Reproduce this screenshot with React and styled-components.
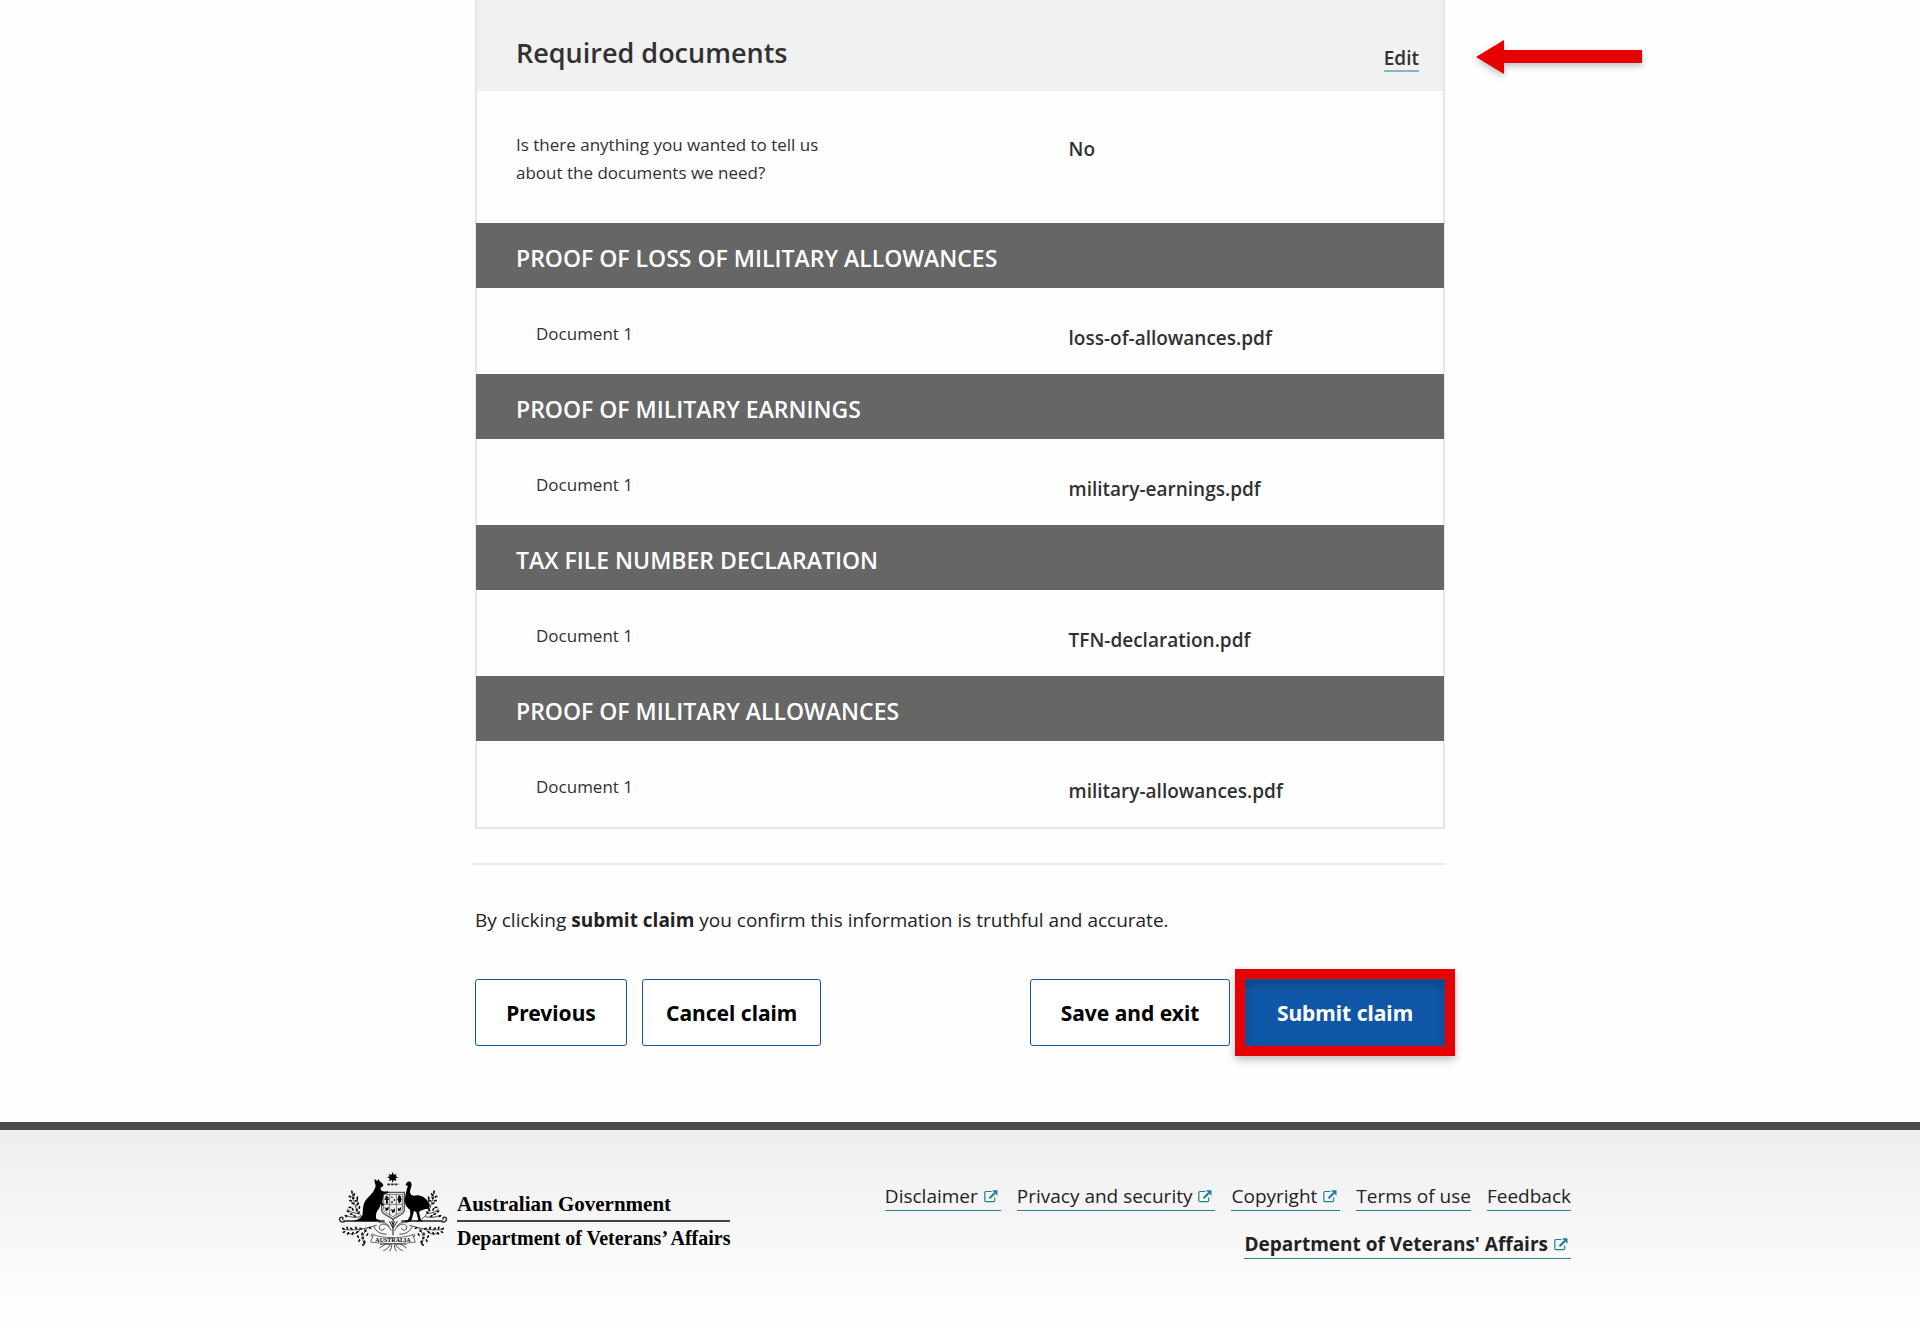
import styled, { createGlobalStyle } from 'styled-components';

const GlobalStyle = createGlobalStyle`
  * {
    box-sizing: border-box;
  }

  body {
    margin: 0;
    background: #fefefe;
    color: #313131;
    font-family: 'Open Sans', 'Noto Sans', sans-serif;
  }
`;

const Main = styled.main`
  max-width: 970px;
  margin: 0 auto 76px;
`;

const Card = styled.section`
  border: 2px solid #e7e7e7;
  border-top: none;
`;

const CardHeader = styled.header`
  position: relative;
  display: flex;
  justify-content: space-between;
  align-items: flex-end;
  padding: 34px 24px 19px 39px;
  background: #f1f1f1;
`;

const CardTitle = styled.h2`
  margin: 0;
  font-size: 27px;
  line-height: 38px;
  font-weight: 600;
`;

const EditLink = styled.a`
  border-bottom: 2px solid #84b7c4;
  color: #313131;
  font-size: 19px;
  line-height: 24px;
  font-weight: 600;
  text-decoration: none;
`;

const Arrow = styled.svg`
  position: absolute;
  top: 36px;
  left: calc(100% + 33px);
  width: 170px;
  height: 44px;
  filter: drop-shadow(0 3px 3px rgba(0, 0, 0, 0.25));
`;

const Answers = styled.dl`
  margin: 0;
`;

const Answer = styled.div`
  display: grid;
  grid-template-columns: 62% 1fr;
  padding: ${({ $nested }) => ($nested ? '32px 39px 23px' : '40px 39px 36px')};
`;

const Question = styled.dt`
  max-width: 340px;
  padding-left: ${({ $nested }) => ($nested ? '20px' : '0')};
  font-size: 17px;
  line-height: 28px;
`;

const Value = styled.dd`
  margin: 0;
  padding: 6px 0 0 2px;
  font-size: 19px;
  line-height: 25px;
  font-weight: 600;
`;

const SectionTitle = styled.h3`
  margin: 0 -1px;
  padding: 19px 40px 14px;
  background: #666;
  color: #fff;
  font-size: 23px;
  line-height: 32px;
  font-weight: 600;
  text-transform: uppercase;
`;

const Divider = styled.hr`
  height: 2px;
  margin: 34px 0 0 -3px;
  border: none;
  background: #ebebeb;
`;

const Confirmation = styled.p`
  margin: 41px 0 45px;
  color: #222;
  font-size: 19px;
  line-height: 28px;
`;

const Actions = styled.div`
  display: flex;
  justify-content: space-between;
`;

const ActionGroup = styled.div`
  display: flex;
  gap: 15px;
`;

const Button = styled.button`
  min-width: ${({ $wide }) => ($wide ? '200px' : '152px')};
  height: 67px;
  padding: 0 23px;
  border: 1px solid #0f56a6;
  border-radius: 3px;
  background: #fff;
  color: #000;
  font-family: 'Noto Sans', sans-serif;
  font-size: 21px;
  font-weight: 700;
  cursor: pointer;
`;

const SubmitButton = styled(Button)`
  border-radius: 0;
  background: #1157a8;
  color: #fff;
  box-shadow: 0 0 0 10px #e60000, 0 4px 8px 10px rgba(0, 0, 0, 0.25),
    inset 0 4px 8px rgba(0, 0, 0, 0.25);
`;

const Footer = styled.footer`
  border-top: 8px solid #4a4a4a;
  background: linear-gradient(#eee, #fefefe 180px);
`;

const FooterInner = styled.div`
  display: flex;
  justify-content: space-between;
  max-width: 1244px;
  min-height: 197px;
  margin: 0 auto;
  padding: 42px 11px 0 0;
`;

const Brand = styled.a`
  display: flex;
  align-items: flex-start;
  gap: 9px;
  color: #000;
  text-decoration: none;
`;

const Crest = styled.svg`
  width: 110px;
  height: 80px;
`;

const BrandText = styled.span`
  display: flex;
  flex-direction: column;
  padding-top: 16px;
  font-family: 'Liberation Serif', serif;
  font-size: 20px;
  line-height: 32px;
  font-weight: 700;
`;

const Government = styled.span`
  border-bottom: 2px solid #444;
  font-size: 21px;
`;

const FooterNav = styled.nav`
  display: flex;
  flex-direction: column;
  align-items: flex-end;
  gap: 20px;
  padding-top: 11px;
`;

const LinkRow = styled.div`
  display: flex;
  gap: 16px;
`;

const FooterLink = styled.a`
  border-bottom: 1px solid #2b8295;
  color: #222;
  font-size: 19px;
  line-height: 27px;
  font-weight: ${({ $bold }) => ($bold ? 700 : 400)};
  text-decoration: none;
  white-space: nowrap;
`;

const LinkIcon = styled.svg`
  width: 14px;
  height: 14px;
  margin: 0 3px 0 6px;
`;

const documents = [
  { title: 'Proof of loss of military allowances', file: 'loss-of-allowances.pdf' },
  { title: 'Proof of military earnings', file: 'military-earnings.pdf' },
  { title: 'Tax file number declaration', file: 'TFN-declaration.pdf' },
  { title: 'Proof of military allowances', file: 'military-allowances.pdf' },
];

const footerLinks = [
  { label: 'Disclaimer', external: true },
  { label: 'Privacy and security', external: true },
  { label: 'Copyright', external: true },
  { label: 'Terms of use' },
  { label: 'Feedback' },
];

// x, y and angle of every leaf on the left side, the right side is mirrored
const leaves = [
  [66, 96, 80], [72, 104, 110], [60, 110, 20], [70, 114, 140], [82, 114, 100],
  [62, 122, 10], [78, 122, 150], [68, 130, 30], [84, 132, 120], [60, 142, 0],
  [54, 154, 20], [68, 148, 60], [64, 162, 10], [80, 150, 110], [86, 158, 130],
  [48, 168, 40], [74, 168, 20], [88, 142, 100],
  [40, 206, 30], [42, 216, 160], [52, 204, 70], [54, 220, 130], [64, 206, 40],
  [68, 220, 110], [78, 204, 60], [82, 216, 140], [92, 206, 30], [96, 222, 100],
  [84, 230, 60], [98, 234, 20], [88, 242, 120], [104, 246, 80], [100, 254, 150],
  [106, 212, 50], [112, 224, 120], [120, 204, 20],
];

const ExternalIcon = () => (
  <LinkIcon viewBox="0 0 14 14" aria-hidden="true">
    <path
      d="M7.5 2.5H2A1.2 1.2 0 0 0 .8 3.700V11.500A1.200 1.200 0 0 0 2 12.700H9.500A1.200 1.200 0 0 0 10.700 11.500V8.500"
      fill="none"
      stroke="#1c7f94"
      strokeWidth="1.200"
    />
    <path d="M5.500 9.300L10.800 4" fill="none" stroke="#1c7f94" strokeWidth="2" />
    <path d="M8 1.300H13.500V6.800Z" fill="#1c7f94" />
  </LinkIcon>
);

const CrestSide = () => (
  <g>
    <g fill="none" stroke="#111" strokeWidth="2.200">
      <path d="M104 178C88 166 76 150 66 100M84 160C72 160 60 156 52 146M76 142C82 134 84 124 82 112M92 170C76 174 60 172 48 166" />
      <path d="M140 196C110 204 78 214 38 208M112 206C98 218 96 236 102 252M90 210C76 226 66 222 52 220" />
      <path d="M184 212C172 188 152 188 148 200C146 212 160 214 164 204M178 200C168 186 156 184 146 188M170 222C156 224 138 216 132 200" />
      <path d="M186 240C176 248 162 254 148 264M184 248C178 262 170 268 160 272M186 250C184 262 184 268 178 274M180 254C168 252 158 250 150 254" />
    </g>
    {leaves.map(([x, y, angle]) => (
      <ellipse key={`${x}-${y}`} cx={x} cy={y} rx="5" ry="2.600" transform={`rotate(${angle} ${x} ${y})`} />
    ))}
  </g>
);

const CoatOfArms = () => (
  <Crest viewBox="24 36 330 240" role="img" aria-label="Australian coat of arms">
    <CrestSide />
    <g transform="translate(378 0) scale(-1 1)">
      <CrestSide />
    </g>

    {/* star and wreath */}
    <path d="M188 36L192 45L200 41L197 49L205 52L197 55L199 63L191 60L188 68L185 60L177 63L179 55L171 52L179 49L176 41L184 45Z" />
    <path d="M172 73H206" fill="none" stroke="#222" strokeWidth="5" strokeDasharray="8 3" />

    {/* base line with curled ends */}
    <path
      d="M40 183H164M214 183H338M44 185C30 190 24 176 32 172C38 170 42 175 37 179M334 185C348 190 354 176 346 172C340 170 336 175 341 179"
      fill="none"
      stroke="#222"
      strokeWidth="4"
    />

    {/* shield */}
    <path d="M155 97H223V150C223 164 202 167 189 178C176 167 155 164 155 150Z" fill="#eee" stroke="#555" strokeWidth="4" />
    <path d="M161 103H217V148C217 158 200 161 189 171C178 161 161 158 161 148Z" fill="none" stroke="#444" strokeWidth="2" />
    <path d="M161 133H217M179 103V166M199 103V166" stroke="#444" strokeWidth="2" />
    <path d="M166 110H175V117H166ZM204 109H213V126H204ZM168 121H174V130H168ZM184 110H188V114H184ZM191 118H195V122H191ZM184 124H188V129H184Z" />
    <path d="M170 107V131M164 118H177M208 106V130M202 118H215" stroke="#111" strokeWidth="4" />
    <path d="M164 141L169 145L176 140L175 150L168 153ZM183 146L189 150L195 145L194 156L187 159ZM203 143L208 146L214 140L212 151L205 154Z" />

    {/* kangaroo */}
    <path d="M134 57L142 63L146 57L150 65C156 68 161 73 160 77C157 81 152 82 151 85C152 91 156 95 163 95L174 94L175 99L161 103C160 112 158 120 156 127L162 135L157 138L152 131C151 141 146 147 141 154C137 163 137 171 139 177L149 180V184H110L68 184C82 179 91 176 96 168C100 158 97 142 103 128C110 112 126 104 131 92C136 84 138 80 136 73C134 68 133 63 134 57Z" />

    {/* emu */}
    <path d="M227 76C228 65 239 61 244 69C247 79 240 87 240 96C240 103 246 107 252 107C266 102 284 109 293 123C299 132 300 142 296 148C289 143 282 150 271 152L267 157L272 178L278 184H258L265 180L259 157L252 152L248 168L245 179L241 185H220L234 179L241 165L240 149C229 142 223 130 224 117C226 107 228 99 230 90C231 84 234 80 233 77Z" />

    {/* stem and scroll */}
    <path d="M189 178V226M178 184L189 204L202 184M184 184L189 194L194 184" fill="none" stroke="#111" strokeWidth="3" />
    <path
      d="M122 246L130 224C158 236 220 236 248 224L256 246C220 252 158 252 122 246ZM130 224C122 218 120 232 130 230M248 224C256 218 258 232 248 230"
      fill="#f8f8f8"
      stroke="#222"
      strokeWidth="2"
    />
    <text x="189" y="246" textAnchor="middle" fontFamily="Liberation Serif, serif" fontSize="18" fontWeight="700">
      AUSTRALIA
    </text>
  </Crest>
);

const App = () => {
  return (
    <>
      <GlobalStyle />
      <Main>
        <Card>
          <CardHeader>
            <CardTitle>Required documents</CardTitle>
            <EditLink href="#edit">Edit</EditLink>
            <Arrow viewBox="0 0 170 44" aria-hidden="true">
              <path d="M0 21L28 4V14H166V27H28V38Z" fill="#e60000" />
            </Arrow>
          </CardHeader>

          <Answers>
            <Answer>
              <Question>Is there anything you wanted to tell us about the documents we need?</Question>
              <Value>No</Value>
            </Answer>
          </Answers>

          {documents.map(({ title, file }) => (
            <section key={title}>
              <SectionTitle>{title}</SectionTitle>
              <Answers>
                <Answer $nested>
                  <Question $nested>Document 1</Question>
                  <Value>{file}</Value>
                </Answer>
              </Answers>
            </section>
          ))}
        </Card>

        <Divider />

        <Confirmation>
          By clicking <strong>submit claim</strong> you confirm this information is truthful and accurate.
        </Confirmation>

        <Actions>
          <ActionGroup>
            <Button type="button">Previous</Button>
            <Button type="button">Cancel claim</Button>
          </ActionGroup>
          <ActionGroup>
            <Button type="button" $wide>Save and exit</Button>
            <SubmitButton type="submit" $wide>Submit claim</SubmitButton>
          </ActionGroup>
        </Actions>
      </Main>

      <Footer>
        <FooterInner>
          <Brand href="#home">
            <CoatOfArms />
            <BrandText>
              <Government>Australian Government</Government>
              <span>Department of Veterans’ Affairs</span>
            </BrandText>
          </Brand>

          <FooterNav>
            <LinkRow>
              {footerLinks.map(({ label, external }) => (
                <FooterLink key={label} href="#">
                  {label}
                  {external && <ExternalIcon />}
                </FooterLink>
              ))}
            </LinkRow>
            <FooterLink href="#" $bold>
              Department of Veterans' Affairs
              <ExternalIcon />
            </FooterLink>
          </FooterNav>
        </FooterInner>
      </Footer>
    </>
  );
};

export default App;
